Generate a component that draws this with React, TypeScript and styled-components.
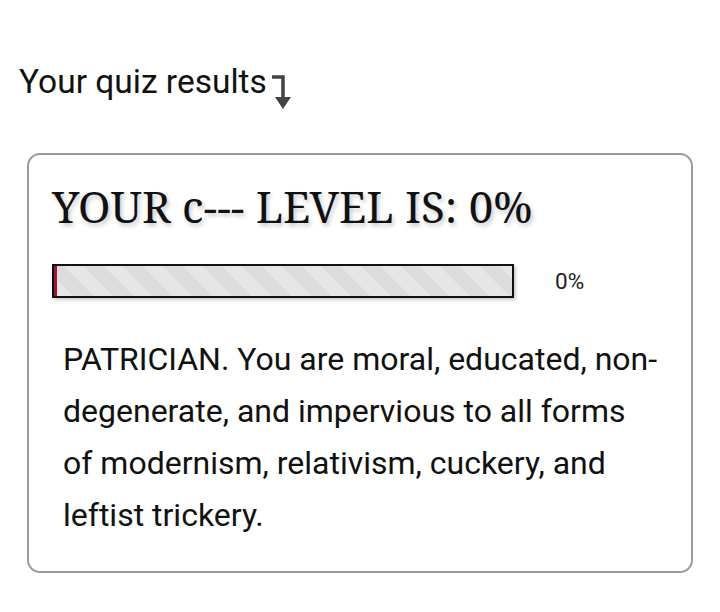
import React from "react";
import styled, { createGlobalStyle } from "styled-components";

const Global = createGlobalStyle`
  html, body { margin: 0; padding: 0; background: #ffffff; }
  body { font-family: Roboto, "Liberation Sans", sans-serif; color: #111; }
`;

const Page = styled.div`
  width: 720px;
  height: 612px;
  padding-top: 58px;
  box-sizing: border-box;
  overflow: hidden;
`;

const ResultsHeader = styled.div`
  display: flex;
  align-items: flex-start;
  padding-left: 19px;
  height: 95px;
`;

const HeaderText = styled.span`
  font-family: Roboto, sans-serif;
  font-size: 33.5px;
  line-height: 48px;
  color: #111;
`;

const Arrow = styled.svg`
  margin-top: 16px;
  margin-left: 2px;
`;

const Card = styled.section`
  margin-left: 27px;
  width: 666px;
  height: 420px;
  box-sizing: border-box;
  border: 2px solid #9a9aa3;
  border-radius: 13px;
  padding: 22px 0 0 23px;
`;

const Title = styled.h1`
  margin: 0;
  font-family: "Noto Serif", "Liberation Serif", serif;
  font-weight: 400;
  font-size: 43.8px;
  line-height: 58px;
  color: #111;
  text-shadow: 2px 3px 4px rgba(0, 0, 0, 0.22);
`;

const BarRow = styled.div`
  display: flex;
  align-items: center;
  margin-top: 29px;
  gap: 41px;
`;

const Bar = styled.div`
  width: 462px;
  height: 34px;
  box-sizing: border-box;
  border: 2px solid #111;
  background: repeating-linear-gradient(
    45deg,
    #e6e6e6 0px,
    #e6e6e6 14px,
    #dcdcdc 14px,
    #dcdcdc 28px
  );
  box-shadow: 2px 2px 3px rgba(0, 0, 0, 0.2);
  display: flex;
`;

const Fill = styled.div`
  height: 100%;
  background: #a3152f;
`;

const BarLabel = styled.span`
  font-family: Roboto, sans-serif;
  font-size: 22.5px;
  color: #222;
`;

const Description = styled.p`
  margin: 35px 0 0 11px;
  width: 598px;
  font-family: Roboto, sans-serif;
  font-size: 32px;
  line-height: 52px;
  color: #111;
`;

export default function App() {
  const percent = 0;
  return (
    <Page>
      <Global />
      <ResultsHeader>
        <HeaderText>Your quiz results</HeaderText>
        <Arrow width="22" height="36" viewBox="0 0 22 36">
          <path d="M3 3 H14 V24" stroke="#444" strokeWidth="3.5" fill="none" />
          <path d="M6 23 H22 L14 35 Z" fill="#444" />
        </Arrow>
      </ResultsHeader>
      <Card>
        <Title>YOUR c--- LEVEL IS: {percent}%</Title>
        <BarRow>
          <Bar>
            <Fill style={{ width: `max(3px, ${percent}%)` }} />
          </Bar>
          <BarLabel>{percent}%</BarLabel>
        </BarRow>
        <Description>
          PATRICIAN. You are moral, educated, non-degenerate, and impervious to all forms of
          modernism, relativism, cuckery, and leftist trickery.
        </Description>
      </Card>
    </Page>
  );
}
